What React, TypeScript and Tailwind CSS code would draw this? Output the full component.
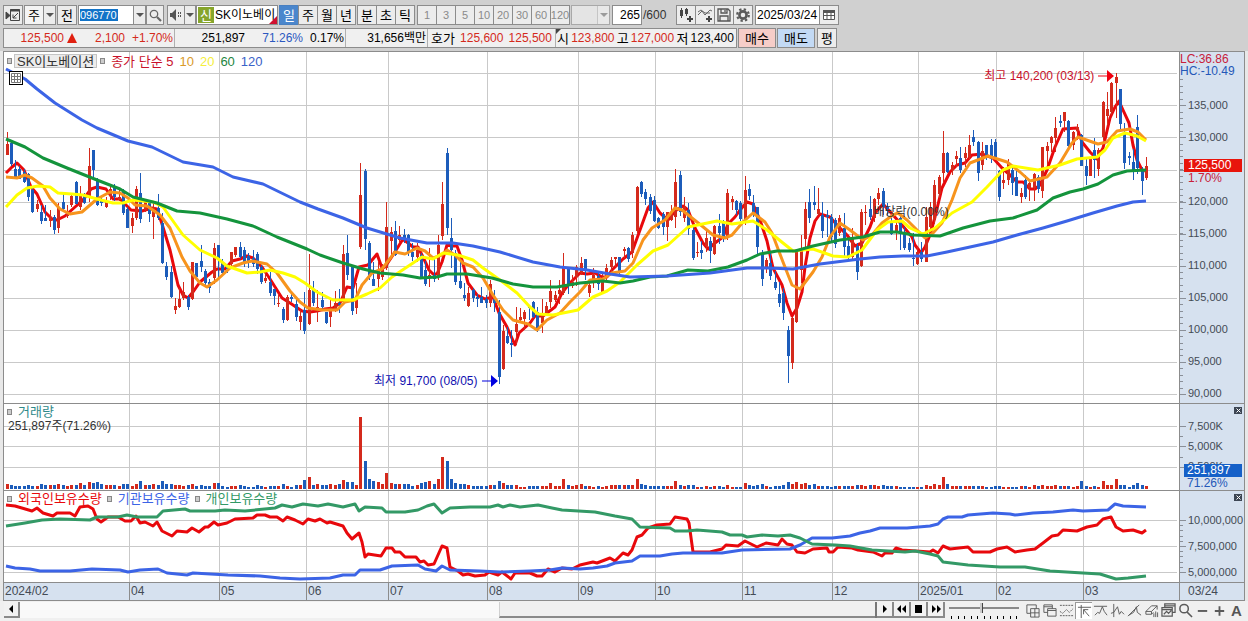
import type { ReactNode } from 'react';

// color, high, body top, body bottom, low (panel units, one entry per session)
const CANDLES = `
r132,144,155,155 b142,143,164,166 b160,169,177,178 b166,169,179,179 b169,172,182,183 b173,174,197,201 b187,190,212,213 r200,204,209,212
b205,212,221,224 b205,218,221,221 r210,217,221,227 b215,217,230,234 r203,207,228,233 b194,202,209,212 r205,213,216,218 r194,196,205,207
b181,182,204,204 r186,196,207,210 b193,196,203,204 r148,166,196,202 b150,150,170,177 b178,180,205,206 b197,200,203,206 r197,202,207,208
r186,189,196,200 b184,188,197,201 r188,197,200,201 b189,191,213,215 b207,209,228,228 r213,218,226,233 r186,189,218,220 b173,193,219,223
r200,202,210,212 b201,203,214,222 r203,207,217,239 b194,208,218,220 b213,223,263,264 b262,266,277,280 b266,272,297,298 r298,306,310,314
r288,299,307,308 r282,292,298,300 b295,297,307,310 r262,262,299,300 b263,263,277,280 b245,261,267,272 b269,271,283,285 b279,282,288,293
r243,248,278,284 b245,245,260,278 b259,263,273,276 b264,266,269,273 r252,252,264,268 r247,247,255,257 b242,247,257,259 b247,250,262,267
b253,256,262,268 b250,258,264,267 b252,254,269,274 b265,267,282,284 r270,278,281,283 b272,282,293,296 b289,289,296,305 r295,303,304,307
b307,309,320,323 r295,297,320,321 b292,297,299,302 b300,304,317,321 r310,316,322,330 b292,310,331,334 r254,290,324,325 b281,290,303,306
r290,307,310,322 b292,300,307,310 b312,312,323,324 r299,308,317,327 r291,303,310,312 b289,303,305,313 r245,254,302,303 b235,253,275,280
b265,267,311,315 r283,298,308,314 r163,195,247,249 b169,171,239,250 b241,243,277,280 b262,279,286,286 r261,270,279,291 r264,266,277,280
r202,227,268,270 r227,232,241,255 b221,231,255,256 r226,235,240,243 b229,235,240,243 b234,235,252,256 b243,252,257,261 r243,250,257,262
b253,255,277,278 b261,270,284,286 r248,275,278,287 b256,275,279,282 r235,245,277,280 r182,204,236,240 b148,153,228,235 b218,238,250,268
b250,253,282,285 b260,281,288,289 b283,295,298,301 r287,293,306,307 b288,290,298,302 b294,297,299,307 b287,297,303,303 b295,299,303,308
r280,284,303,307 b290,299,303,312 b300,312,377,384 r325,331,369,370 b327,336,343,344 b330,343,345,357 r307,324,332,345 r308,317,320,323
r310,312,319,330 b305,307,308,320 b301,302,317,318 b307,312,330,332 r299,314,323,333 r302,306,313,316 r280,291,302,308 r291,295,300,302
r280,290,294,304 r253,267,293,295 b267,269,286,294 r275,282,286,288 r265,267,277,286 r257,263,273,275 b259,259,271,280 r280,285,293,297
r268,275,282,288 b273,276,284,290 r272,278,292,293 r264,268,277,282 r257,260,267,272 r257,257,259,267 b257,257,272,275 r247,249,251,258
b247,248,259,262 r232,235,253,258 r186,187,231,233 b181,182,194,197 b189,192,199,205 b194,197,211,214 b196,200,221,222 b217,218,228,229
b212,214,227,235 r212,212,227,241 r205,212,220,221 r169,182,217,228 b171,175,212,216 r197,207,218,222 b203,210,229,235 b227,230,258,260
r242,252,253,257 b241,250,253,259 r230,238,246,252 b237,241,251,263 r225,226,254,255 b214,226,233,244 b220,221,239,242 r189,193,237,240
r196,199,202,210 b200,201,210,215 b201,203,219,221 r176,190,219,225 b184,189,196,200 b195,203,213,217 b207,207,247,256 b250,253,279,286
r258,260,268,273 b253,263,276,280 b271,282,288,290 b282,294,303,307 b288,293,313,320 b326,330,356,383 r317,318,363,369 r249,251,322,323
r235,249,270,283 r202,209,239,247 b189,202,218,223 b186,202,205,210 r188,209,214,215 b202,215,231,238 b210,215,217,237 b214,217,237,242
b218,220,244,248 r215,218,233,236 b213,228,247,256 b240,246,257,259 r228,238,257,260 b243,246,272,280 r209,212,266,267 r205,212,213,225
b196,209,217,220 r198,199,218,222 r188,193,199,205 b188,191,207,215 b203,207,209,215 b218,222,234,235 r220,225,233,240 b215,218,233,250
b227,232,248,250 b238,243,250,252 b233,258,259,266 r247,252,264,265 b242,252,259,262 r207,217,262,262 r202,207,227,230 r180,185,220,224
r175,177,194,198 r131,153,173,182 b152,153,172,173 r162,165,170,175 r151,156,159,167 b147,158,170,173 r147,153,158,167 r135,145,157,160
b130,137,142,146 b141,142,173,181 r142,151,165,170 b145,145,155,160 b139,145,157,163 b139,142,157,160 b170,171,197,201 r167,180,183,189
r159,163,180,185 b167,170,183,195 b167,177,196,196 r188,193,197,203 b175,180,197,199 r181,183,188,201 r173,174,188,201 b175,177,189,193
r147,147,191,198 r142,146,151,165 r136,137,143,152 r117,128,138,152 b115,121,123,127 r112,112,121,132 b120,121,146,150 r131,132,145,150
r124,127,131,140 b134,135,166,166 b158,166,176,185 r157,159,176,176 b138,150,160,178 r148,150,169,176 r101,102,137,140 r92,109,116,125
r82,83,112,115 r73,77,83,118 b89,89,124,130 b123,133,163,169 b152,156,158,165 b149,162,171,180 b115,127,168,174 b167,170,181,195
r157,166,178,180`
  .trim()
  .split(/\s+/)
  .map((entry, i) => {
    const [high, top, bottom, low] = entry.slice(1).split(',').map(Number);
    return { x: Math.round(6.5 + i * 4.316), up: entry[0] === 'r', high, top, bottom, low };
  });

const VOLUMES = [
  5, 4, 3, 3, 3, 4, 3, 3, 5, 4, 4, 4, 5, 4, 3, 4, 4, 6, 4, 7,
  6, 7, 5, 4, 4, 4, 3, 5, 5, 3, 5, 8, 4, 4, 5, 4, 8, 5, 5, 4,
  4, 3, 4, 5, 3, 4, 3, 3, 6, 6, 3, 2, 3, 3, 4, 3, 2, 2, 4, 3,
  2, 3, 3, 3, 5, 3, 2, 4, 4, 9, 12, 4, 5, 4, 4, 5, 4, 5, 9, 7,
  7, 4, 72, 28, 10, 8, 7, 5, 16, 6, 5, 5, 5, 5, 3, 4, 6, 7, 8, 5,
  10, 32, 28, 10, 6, 5, 5, 4, 3, 3, 3, 3, 4, 4, 8, 6, 4, 4, 4, 2,
  2, 3, 3, 3, 3, 3, 6, 3, 3, 10, 4, 3, 4, 5, 3, 3, 2, 3, 2, 3,
  4, 4, 4, 4, 4, 4, 10, 5, 4, 3, 3, 3, 3, 3, 3, 8, 4, 3, 4, 4,
  2, 2, 3, 2, 3, 3, 2, 4, 2, 2, 2, 6, 4, 3, 4, 5, 3, 2, 3, 3,
  4, 7, 5, 7, 5, 6, 4, 5, 3, 3, 3, 2, 3, 3, 3, 3, 3, 4, 4, 3,
  4, 4, 3, 4, 3, 3, 3, 2, 2, 2, 2, 2, 2, 4, 3, 5, 4, 12, 5, 3,
  3, 3, 3, 3, 3, 3, 3, 2, 2, 3, 3, 2, 2, 2, 2, 3, 3, 2, 4, 3,
  4, 3, 3, 4, 3, 3, 3, 2, 3, 8, 3, 2, 3, 2, 8, 4, 4, 10, 4, 4,
  2, 4, 6, 4, 3,
];

const FAST_AVERAGE = {
  color: '#e8080c',
  points:
    '6,173 12,167 17,163 24,170 31,187 37,194 45,212 52,219 57,220 65,216 75,207 83,200 91,189 97,187 106,189 113,199 120,199 131,210 142,211 152,208 157,209 162,224 170,250 178,285 183,295 188,298 193,292 200,282 212,272 217,269 225,269 232,261 240,259 247,256 253,258 262,267 270,279 282,298 290,303 302,311 310,312 317,311 325,309 333,308 340,303 347,287 353,288 359,267 368,265 377,254 382,268 385,267 393,255 403,239 408,243 413,247 418,247 423,257 429,270 433,274 437,274 442,262 447,245 452,246 457,246 462,260 468,283 477,295 485,299 493,297 499,313 507,327 515,345 519,333 530,323 535,316 543,316 555,307 562,293 568,285 580,273 587,274 595,273 602,277 607,277 612,270 623,259 632,252 640,230 648,208 653,202 660,213 668,220 675,211 683,206 688,210 695,228 703,243 708,249 715,243 723,237 728,224 735,217 740,210 747,202 753,204 760,220 767,241 773,268 782,285 787,303 792,316 797,308 802,292 805,267 810,238 815,221 820,214 830,217 838,226 847,235 855,246 862,243 870,227 875,213 883,204 893,215 902,225 912,237 915,245 921,253 925,247 930,235 935,217 942,188 950,172 957,165 965,163 972,155 982,154 993,158 1002,168 1010,175 1017,182 1023,182 1030,189 1035,189 1040,185 1047,170 1055,147 1063,129 1077,128 1082,142 1090,152 1097,159 1103,148 1110,118 1115,107 1119,101 1123,110 1129,123 1133,145 1137,160 1142,170 1145,171',
};

const SLOW_AVERAGES = [
  {
    color: '#f7941d',
    points:
      '6,177 17,178 25,175 32,178 43,186 50,198 60,209 70,214 82,212 97,199 110,192 120,193 128,198 135,205 147,206 160,215 170,228 182,257 190,271 200,283 207,287 217,280 230,268 243,263 252,261 267,264 277,273 290,291 300,302 308,308 323,310 337,310 345,302 355,300 362,285 372,273 382,269 395,252 405,254 417,248 425,251 433,258 442,255 447,250 455,255 463,263 473,267 483,278 493,295 503,310 513,320 528,324 537,330 547,320 560,313 570,302 580,292 590,280 603,279 612,273 625,271 633,263 643,240 652,228 665,220 675,208 682,210 692,218 702,226 713,235 725,238 732,235 743,222 753,213 765,222 772,233 783,262 792,285 800,289 813,272 822,257 830,237 840,223 850,230 863,240 872,235 882,223 893,215 898,213 907,220 917,230 925,238 933,233 942,223 952,200 960,178 970,163 988,156 1007,162 1020,172 1030,181 1047,177 1060,163 1072,143 1078,137 1098,144 1107,142 1117,131 1130,129 1138,132 1146,140',
  },
  {
    color: '#ffff00',
    points:
      '6,207 17,195 27,188 38,186 50,187 58,193 72,194 83,195 97,199 113,203 123,203 133,200 153,202 163,207 183,235 200,250 217,258 227,266 247,273 260,272 270,270 283,273 295,277 305,283 317,292 333,300 353,300 367,294 380,288 392,277 410,265 422,257 433,259 443,253 458,255 473,260 483,268 500,280 517,293 530,307 538,314 553,315 578,310 593,297 607,291 620,282 637,265 653,251 668,245 688,227 717,221 732,224 753,221 767,230 783,243 793,251 813,249 833,256 848,257 862,250 877,230 888,222 902,221 910,228 923,234 935,228 952,213 972,202 987,187 1003,170 1013,166 1038,170 1060,165 1077,159 1097,157 1105,150 1113,138 1125,133 1137,136 1146,141',
  },
  {
    color: '#14943c',
    points:
      '6,139 25,147 43,158 67,168 97,180 120,189 133,197 157,203 177,211 200,213 227,219 253,226 277,237 307,249 320,255 343,263 363,269 380,273 403,275 420,278 437,277 447,274 467,274 492,278 513,284 533,287 557,287 580,283 603,281 620,283 633,281 650,277 667,276 688,270 708,271 728,267 747,260 760,254 777,251 795,251 813,246 840,240 863,237 880,232 897,232 913,235 940,236 963,228 990,221 1013,218 1037,210 1053,198 1070,192 1083,189 1098,184 1113,175 1127,171 1146,170',
  },
  {
    color: '#3c64e6',
    points:
      '6,69 25,79 37,89 55,103 82,120 97,128 128,141 152,147 183,162 213,167 233,177 263,184 300,202 318,209 343,218 367,228 400,238 427,243 453,243 473,246 500,252 533,262 560,267 587,270 610,274 630,277 667,276 710,273 747,268 767,268 793,269 820,264 860,259 880,257 903,256 927,256 947,252 970,247 993,242 1017,235 1043,228 1067,221 1093,213 1117,206 1133,202 1146,201',
  },
];

const HOLDINGS = [
  {
    name: '외국인보유수량',
    color: '#e8080c',
    points:
      '6,505 15,506 32,511 37,508 43,513 53,516 57,513 70,513 75,516 80,507 88,506 93,509 97,519 101,522 108,517 118,517 125,521 131,521 136,516 140,523 145,522 153,526 157,522 162,531 172,536 177,531 187,532 192,528 199,532 205,527 208,527 214,522 218,525 227,523 235,519 253,518 257,515 265,515 270,517 277,517 283,521 287,517 295,520 303,524 308,519 315,521 320,519 327,523 330,522 343,526 347,533 352,539 359,533 362,542 365,557 368,554 381,556 386,548 392,548 395,552 400,552 405,557 416,557 420,562 424,561 428,565 434,564 438,555 442,546 447,548 450,567 458,571 463,575 468,574 475,576 485,575 489,572 498,575 502,572 511,579 515,573 530,573 537,576 542,576 548,569 555,572 562,568 572,569 580,565 593,562 597,563 610,558 615,561 623,553 628,555 632,550 637,537 642,535 648,528 657,525 670,524 675,517 687,519 689,523 693,552 710,552 722,549 726,545 738,546 745,541 757,547 766,543 778,545 782,539 787,544 792,545 797,552 805,553 813,549 827,548 829,552 833,552 838,547 852,548 858,550 873,552 882,556 885,553 892,553 896,548 902,550 930,552 933,550 938,553 943,546 950,549 968,547 973,552 990,552 997,549 1007,547 1015,552 1027,550 1035,549 1043,543 1052,536 1058,535 1063,530 1077,531 1087,527 1097,525 1103,519 1111,517 1116,527 1123,531 1133,530 1142,533 1146,530',
  },
  {
    name: '기관보유수량',
    color: '#3c64e6',
    points:
      '6,566 15,568 30,569 40,571 70,571 92,569 120,570 128,572 140,570 158,569 167,573 187,575 193,573 228,575 260,576 280,578 300,579 330,578 343,575 355,575 360,570 380,570 392,566 418,565 425,569 436,571 442,566 450,570 480,571 500,572 530,571 550,570 562,568 580,569 593,568 607,566 615,563 632,561 640,556 660,556 672,554 683,553 722,553 742,550 790,549 800,545 812,538 832,538 850,536 860,533 870,531 880,528 907,528 930,526 938,524 943,519 948,517 962,517 968,515 993,513 1010,514 1015,515 1033,513 1053,512 1073,510 1083,511 1108,510 1115,504 1123,506 1146,507',
  },
  {
    name: '개인보유수량',
    color: '#339966',
    points:
      '6,526 25,523 42,520 60,519 90,520 97,517 118,517 127,515 137,517 157,517 163,511 185,509 190,511 215,511 225,510 245,511 275,508 282,505 292,507 303,504 318,506 328,504 343,507 355,504 359,511 365,507 382,508 386,512 405,512 418,510 427,506 434,504 442,513 450,508 470,507 490,507 498,505 503,507 510,505 520,507 538,505 552,508 562,510 595,512 615,516 632,519 640,527 670,528 675,531 687,531 697,530 722,532 730,535 742,535 747,537 762,535 778,536 790,535 800,538 812,544 835,545 850,546 872,550 905,552 915,551 930,554 938,556 943,562 968,565 1000,567 1025,567 1050,571 1083,573 1100,574 1116,579 1128,578 1146,576',
  },
];

const MONTH_LINES = [129, 219, 306, 388, 487, 578, 655, 742, 832, 918, 996, 1083];
const MONTHS = ['2024/02', '04', '05', '06', '07', '08', '09', '10', '11', '12', '2025/01', '02', '03'];
const UP = '#d42a1c';
const DOWN = '#1c5cba';

const frame = 'border border-[#8c8c8c] bg-[#ececec]';
const iconButton = `${frame} flex h-5 items-center justify-center shrink-0`;

function Plot({ top, height, grid, label, children }: { top: number; height: number; grid: number[]; label: string; children: ReactNode }) {
  return (
    <svg className="block h-full w-full" viewBox={`4 ${top} 1175 ${height}`} preserveAspectRatio="none" role="img" aria-label={label}>
      <g stroke="#c9c9c9" strokeWidth="1" shapeRendering="crispEdges">
        {grid.map((y) => (
          <line key={y} x1="4" x2="1177" y1={y + 0.5} y2={y + 0.5} />
        ))}
        {MONTH_LINES.map((x) => (
          <line key={x} x1={x + 0.5} x2={x + 0.5} y1={top} y2={top + height} />
        ))}
      </g>
      {children}
    </svg>
  );
}

function Ticks({ top, height, major, step }: { top: number; height: number; major: number[]; step: number }) {
  const minor: number[] = [];
  for (let y = major[major.length - 1]; y > top + 25; y -= step) minor.push(Math.round(y));
  return (
    <svg className="h-full w-2 shrink-0" viewBox={`0 ${top} 8 ${height}`} preserveAspectRatio="none" stroke="#8a8f98" shapeRendering="crispEdges" aria-hidden="true">
      {minor.map((y) => (
        <line key={y} x1="0" x2="3" y1={y + 0.5} y2={y + 0.5} />
      ))}
      {major.map((y) => (
        <line key={`m${y}`} x1="0" x2="6" y1={y + 0.5} y2={y + 0.5} />
      ))}
    </svg>
  );
}

function Marker() {
  return <span className="h-[6px] w-[5px] shrink-0 border border-[#888] bg-[#ccc]" />;
}

function Caret() {
  return (
    <svg className="pointer-events-none h-1 w-2" viewBox="0 0 8 4" aria-hidden="true">
      <path d="M0 0h8L4 4z" fill="#555" />
    </svg>
  );
}

function CloseButton() {
  return (
    <button aria-label="닫기" className="absolute right-[2px] top-[3px] flex h-[7px] w-2 items-center justify-center bg-[#3d4654]">
      <svg className="h-[5px] w-[5px]" viewBox="0 0 5 5" stroke="#fff" strokeWidth="1">
        <path d="M.5.5l4 4M4.5.5l-4 4" />
      </svg>
    </button>
  );
}

function TopBar() {
  return (
    <div className="flex items-center pl-[3px] pt-[5px] leading-none">
      <button aria-label="패널 접기" className={`${iconButton} w-5`}>
        <svg className="h-4 w-4" viewBox="0 0 16 16" fill="none" stroke="#444">
          <path d="M5.5 2.5h9v11h-9z" />
          <path d="M5 3.5h10" strokeWidth="2" />
          <path d="M1 5v7l4-3.5z" fill="#444" />
          <path d="M13 6L8 11M8 7.500V11h3.500" />
        </svg>
      </button>
      <div className="relative ml-px">
        <select aria-label="종목 구분" className="h-5 w-8 appearance-none border border-[#8c8c8c] bg-[#f4f4f4] pl-[3px] text-[13px] leading-none">
          <option>주</option>
        </select>
        <span className="pointer-events-none absolute inset-y-px right-px flex w-3 items-center justify-center border-l border-[#8c8c8c] bg-[#ececec]">
          <Caret />
        </span>
      </div>
      <button className={`${iconButton} ml-px w-5 text-[13px]`}>전</button>
      <div className={`${frame} ml-px flex h-5 w-[68px]`}>
        <label className="flex min-w-0 flex-1 items-center bg-white pl-px">
          <span className="sr-only">종목코드</span>
          <input defaultValue="096770" className="h-3 w-[38px] bg-[#1173c8] text-[11px] text-white outline-none" />
        </label>
        <button aria-label="종목 목록" className="flex w-3 items-center justify-center border-l border-[#8c8c8c]">
          <Caret />
        </button>
      </div>
      <button aria-label="검색" className={`${iconButton} w-[18px]`}>
        <svg className="h-[13px] w-[13px]" viewBox="0 0 13 13" fill="none" stroke="#666">
          <circle cx="5" cy="5" r="3.7" strokeWidth="1.3" />
          <path d="M8 8l4 4" strokeWidth="2.2" />
        </svg>
      </button>
      <button aria-label="음성" className={`${iconButton} ml-[3px] w-[18px]`}>
        <svg className="h-3 w-3" viewBox="0 0 12 12" fill="#555">
          <path d="M0 4h2l4-4v12L2 8H0zM8 3h1v2H8zM8 6h1v2H8zM10 3h1v2h-1zM10 6h1v2h-1z" />
        </svg>
      </button>
      <button aria-label="음성 옵션" className={`${iconButton} -ml-px w-3`}>
        <Caret />
      </button>
      <div className="relative flex h-5 w-[82px] shrink-0 border border-[#8c8c8c] bg-white">
        <span className="m-px flex w-4 shrink-0 items-center justify-center bg-[#86a52c] text-[13px] text-white">신</span>
        <span className="flex flex-1 items-center whitespace-nowrap">SK이노베이</span>
        <svg className="absolute bottom-0 right-0 h-2 w-2" viewBox="0 0 8 8" aria-hidden="true">
          <path d="M8 0v8H0z" fill="#d01030" />
        </svg>
      </div>
      <div className="ml-px flex text-[13px]">
        <button className="h-5 w-5 border border-[#4a80c0] bg-[#4a86cc] text-white">일</button>
        {['주', '월', '년'].map((unit) => (
          <button key={unit} className={`${iconButton} -ml-px w-5`}>
            {unit}
          </button>
        ))}
      </div>
      <div className="ml-px flex text-[13px]">
        {['분', '초', '틱'].map((unit) => (
          <button key={unit} className={`${iconButton} -mr-px w-5`}>
            {unit}
          </button>
        ))}
      </div>
      <div className="ml-[3px] flex text-[11px] text-[#8a8a8a]">
        {['1', '3', '5', '10', '20', '30', '60', '120'].map((n) => (
          <button key={n} className={`${iconButton} -mr-px w-5`}>
            {n}
          </button>
        ))}
      </div>
      <div className="relative ml-[2px]">
        <select aria-label="주기" disabled className="h-5 w-[39px] appearance-none border border-[#a8a8a8] bg-[#e4e4e4]" />
        <span className="pointer-events-none absolute inset-y-px right-px flex w-3 items-center justify-center border-l border-[#a8a8a8] bg-[#ececec] opacity-50">
          <Caret />
        </span>
      </div>
      <label className="ml-[2px] flex items-center">
        <input aria-label="조회 개수" defaultValue="265" className="h-5 w-[30px] border border-[#8c8c8c] bg-white pr-px text-right outline-none" />
        <span className="w-[34px] pl-px text-[#333]">/600</span>
      </label>
      <div className="flex">
        <button aria-label="차트 추가" className={`${iconButton} -mr-px w-5`}>
          <svg className="h-4 w-4" viewBox="0 0 16 16" fill="#444">
            <path d="M3 1h1v2h1v6H4v2H3V9H2V3h1zM8 1h1v1h1v5H9v2H8V7H7V2h1zM11 9h2v2h2v2h-2v2h-2v-2H9v-2h2z" />
          </svg>
        </button>
        <button aria-label="지표 추가" className={`${iconButton} -mr-px w-5`}>
          <svg className="h-4 w-4" viewBox="0 0 16 16" fill="none" stroke="#666">
            <path d="M1 8l4-4 3 4 5-5 2 1M1 5l3-2 4 3 5 0" />
            <path d="M11 9h2v2h2v2h-2v2h-2v-2H9v-2h2z" fill="#444" stroke="none" />
          </svg>
        </button>
        <button aria-label="저장" className={`${iconButton} -mr-px w-5`}>
          <svg className="h-4 w-4" viewBox="0 0 16 16" fill="none" stroke="#555" strokeWidth="1.3">
            <path d="M2 2h10l2 2v10H2zM5 2v4h6V2M4 14V9h8v5M9 3v2" />
          </svg>
        </button>
        <button aria-label="설정" className={`${iconButton} w-5`}>
          <svg className="h-[14px] w-[14px]" viewBox="0 0 14 14" fill="none" stroke="#5a5a5a">
            <circle cx="7" cy="7" r="3.6" strokeWidth="2.6" />
            <circle cx="7" cy="7" r="5.8" strokeWidth="2.2" strokeDasharray="2.3 2.255" />
          </svg>
        </button>
      </div>
      <label className="ml-[2px] flex">
        <input aria-label="조회 일자" defaultValue="2025/03/24" className="h-5 w-[65px] border border-[#8c8c8c] bg-white pl-px outline-none" />
      </label>
      <button aria-label="달력" className={`${iconButton} -ml-px w-5`}>
        <svg className="h-[10px] w-3" viewBox="0 0 12 10" fill="none" stroke="#555">
          <path d="M.5.5h11v9H.5zM.5 5.5h11M4 2v8M8 2v8" fill="#fff" />
          <path d="M0 1.5h12" strokeWidth="3" />
        </svg>
      </button>
    </div>
  );
}

function QuoteBar() {
  return (
    <div className="flex pb-[3px] pl-[3px] pt-[3px]">
      <div className="flex h-5 items-center whitespace-nowrap border border-[#8c8c8c] bg-[#f0f0f0] leading-none">
        <div className="flex h-full w-[171px] items-center border-r border-[#b0b0b0] pr-px text-right text-[#d42a1c]">
          <span className="w-[60px]">125,500</span>
          <svg className="ml-[3px] h-[10px] w-[10px]" viewBox="0 0 10 10" aria-hidden="true">
            <path d="M5 0l5 10H0z" fill="#e02010" />
          </svg>
          <span className="flex-1">2,100</span>
          <span className="w-12">+1.70%</span>
        </div>
        <div className="flex h-full w-[171px] items-center border-r border-[#b0b0b0] pr-px text-right">
          <span className="w-[70px]">251,897</span>
          <span className="w-[58px] text-[#2c58c0]">71.26%</span>
          <span className="flex-1">0.17%</span>
        </div>
        <div className="flex h-full w-[82px] items-center justify-end border-r border-[#b0b0b0] pr-px">31,656백만</div>
        <div className="flex h-full w-32 items-center justify-between border-r border-[#b0b0b0] pl-[3px] pr-[3px]">
          <span className="text-[13px]">호가</span>
          <span className="text-[#d42a1c]">125,600</span>
          <span className="text-[#d42a1c]">125,500</span>
        </div>
        <div className="relative flex h-full w-[180px] items-center justify-between pl-px pr-[2px]">
          <svg className="absolute left-0 top-0 h-[5px] w-[5px]" viewBox="0 0 5 5" aria-hidden="true">
            <path d="M0 0h5L0 5z" fill="#444" />
          </svg>
          <span className="text-[13px]">시</span>
          <span className="text-[#d42a1c]">123,800</span>
          <span className="text-[13px]">고</span>
          <span className="text-[#d42a1c]">127,000</span>
          <span className="text-[13px]">저</span>
          <span>123,400</span>
        </div>
      </div>
      <button className="ml-px h-5 w-[38px] border border-[#8c8c8c] bg-[#f6cdc8] text-[13px] leading-none">매수</button>
      <button className="ml-px h-5 w-[38px] border border-[#8c8c8c] bg-[#c3daf5] text-[13px] leading-none">매도</button>
      <button className="ml-[2px] h-5 w-5 border border-[#8c8c8c] bg-[#ececec] text-[13px] leading-none">평</button>
    </div>
  );
}

function PricePanel() {
  return (
    <section className="flex h-[351px]">
      <div className="relative min-w-0 flex-1">
        <Plot top={52} height={351} grid={[73, 105, 137, 170, 202, 234, 266, 298, 330, 362, 394]} label="주가 차트">
          <polyline points={FAST_AVERAGE.points} stroke={FAST_AVERAGE.color} fill="none" strokeWidth="3" strokeLinejoin="round" />
          <g shapeRendering="crispEdges">
            {CANDLES.map((c) => (
              <g key={c.x} fill={c.up ? UP : DOWN}>
                <rect x={c.x} y={c.high} width="1" height={Math.max(1, c.low - c.high)} />
                <rect x={c.x - 1} y={c.top} width="3" height={Math.max(1, c.bottom - c.top)} />
              </g>
            ))}
          </g>
          <g fill="none" strokeWidth="3" strokeLinejoin="round">
            {SLOW_AVERAGES.map((ma) => (
              <polyline key={ma.color} points={ma.points} stroke={ma.color} />
            ))}
          </g>
        </Plot>
        <div className="absolute left-[3px] top-px flex h-4 items-center whitespace-nowrap text-[13px] leading-none">
          <Marker />
          <span className="ml-[2px] flex h-[14px] items-center border border-[#c4c4c4] bg-[#ececec] px-[2px] text-[#333]">SK이노베이션</span>
          <span className="w-[3px]" />
          <Marker />
          <span className="ml-[6px] text-[#c8102a]">종가 단순 5</span>
          <span className="ml-[6px] text-[#d99a2a]">10</span>
          <span className="ml-[6px] text-[#f4ee3c]">20</span>
          <span className="ml-[6px] text-[#23863f]">60</span>
          <span className="ml-[6px] text-[#3a62c8]">120</span>
        </div>
        <button aria-label="표 보기" className="absolute left-[5px] top-[19px] flex h-[14px] w-[14px] items-center justify-center border border-black bg-white">
          <svg className="h-[10px] w-[10px]" viewBox="0 0 10 10" fill="none" stroke="#777">
            <path d="M.5.5h9v9h-9zM.5 3.5h9M.5 6.5h9M3.5.5v9M6.500.5v9" />
          </svg>
        </button>
        <p className="absolute right-[5.5%] top-4 flex items-center gap-1 whitespace-nowrap leading-4 text-[#c8102a]">
          최고 140,200 (03/13)
          <svg className="h-3 w-4" viewBox="0 0 16 12" aria-hidden="true">
            <path d="M0 5.5h9V0l7 6-7 6V6.500H0z" fill="#f00010" />
          </svg>
        </p>
        <p className="absolute right-[58%] top-[321px] flex items-center gap-1 whitespace-nowrap leading-4 text-[#1010b0]">
          최저 91,700 (08/05)
          <svg className="h-3 w-4" viewBox="0 0 16 12" aria-hidden="true">
            <path d="M0 5.5h9V0l7 6-7 6V6.500H0z" fill="#0000e0" />
          </svg>
        </p>
        <p className="absolute left-[74%] top-[152px] whitespace-nowrap leading-4 text-[#333]">배당락(0.00%)</p>
      </div>
      <div className="relative flex w-[65px] shrink-0 border-l border-[#8c8c8c] bg-[#d6e1ef]">
        <Ticks top={52} height={351} major={[105, 137, 170, 202, 234, 266, 298, 330, 362, 394]} step={6.42} />
        <div className="pt-[37px] text-[11px] leading-8 text-[#444b55]">
          {['135,000', '130,000', '', '120,000', '115,000', '110,000', '105,000', '100,000', '95,000', '90,000'].map((price, i) => (
            <p key={i} className="h-8">
              {price}
            </p>
          ))}
        </div>
        <div className="absolute left-0 top-px leading-3">
          <p className="text-[#c8203a]">LC:36.86</p>
          <p className="text-[#2458b8]">HC:-10.49</p>
        </div>
        <div className="absolute left-1 right-[2px] top-[107px] leading-[13px]">
          <p className="bg-[#e8150c] pl-1 text-white">125,500</p>
          <p className="pl-1 text-[#c8203a]">1.70%</p>
        </div>
      </div>
    </section>
  );
}

function VolumePanel() {
  return (
    <section className="flex h-[87px] border-t border-[#8c8c8c]">
      <div className="relative min-w-0 flex-1">
        <Plot top={404} height={86} grid={[426, 446, 467]} label="거래량 차트">
          <g shapeRendering="crispEdges">
            {CANDLES.map((c, i) => (
              <rect key={c.x} x={c.x - 1} y={489 - VOLUMES[i]} width="3" height={VOLUMES[i]} fill={c.up ? UP : DOWN} />
            ))}
          </g>
        </Plot>
        <div className="absolute left-[3px] top-px leading-[14px]">
          <p className="flex items-center gap-[6px] text-[13px] text-[#2f8a8a]">
            <Marker />
            거래량
          </p>
          <p className="pl-px text-[#333]">251,897주(71.26%)</p>
        </div>
      </div>
      <div className="relative flex w-[65px] shrink-0 border-l border-[#8c8c8c] bg-[#d6e1ef]">
        <Ticks top={404} height={86} major={[426, 446, 467]} step={10.3} />
        <div className="pt-3 text-[11px] leading-5 text-[#444b55]">
          <p>7,500K</p>
          <p>5,000K</p>
          <p>2,500K</p>
        </div>
        <div className="absolute left-1 right-[2px] top-[60px] leading-[13px]">
          <p className="bg-[#1560c8] pl-[3px] text-white">251,897</p>
          <p className="pl-[3px] text-[#2458b8]">71.26%</p>
        </div>
        <CloseButton />
      </div>
    </section>
  );
}

function HoldingsPanel() {
  return (
    <section className="flex h-[92px] border-t border-[#8c8c8c]">
      <div className="relative min-w-0 flex-1">
        <Plot top={491} height={91} grid={[520, 546, 572]} label="보유수량 차트">
          <g fill="none" strokeWidth="3" strokeLinejoin="round">
            {HOLDINGS.map((h) => (
              <polyline key={h.name} points={h.points} stroke={h.color} />
            ))}
          </g>
        </Plot>
        <div className="absolute left-[3px] top-px flex gap-[5px] whitespace-nowrap text-[13px] leading-[14px]">
          {HOLDINGS.map((h) => (
            <p key={h.name} className="flex items-center gap-[6px]">
              <Marker />
              <span style={{ color: h.color }}>{h.name}</span>
            </p>
          ))}
        </div>
      </div>
      <div className="relative flex w-[65px] shrink-0 border-l border-[#8c8c8c] bg-[#d6e1ef]">
        <Ticks top={491} height={91} major={[520, 546, 572]} step={5.2} />
        <div className="pt-4 text-[11px] leading-[26px] text-[#444b55]">
          <p>10,000,000</p>
          <p>7,500,000</p>
          <p>5,000,000</p>
        </div>
        <CloseButton />
      </div>
    </section>
  );
}

function TimeAxis() {
  return (
    <div className="flex h-[18px] border-t border-[#8c8c8c] bg-[#d6e1ef] text-[#444b55]">
      <div className="grid min-w-0 flex-1 grid-cols-[125fr_90fr_87fr_82fr_99fr_91fr_77fr_87fr_90fr_86fr_78fr_87fr_96fr] leading-[17px]">
        {MONTHS.map((month, i) => (
          <span key={i} className={i ? 'min-w-0 border-l border-[#8c8c8c] pl-px' : 'min-w-0 pl-px'}>
            {month}
          </span>
        ))}
      </div>
      <span className="w-[65px] shrink-0 border-l border-[#8c8c8c] pl-2 leading-[17px]">03/24</span>
    </div>
  );
}

const TOOLS: { name: string; art: ReactNode }[] = [
  { name: '창 추가', art: <path d="M12 6V2H2v9h4M6 6h9v9H6zM10.5 6v9M6 10.5h9" /> },
  { name: '창 복사', art: <path d="M11 6V2H2v8h4M6 6h9v8H6zM2 4h9M6 8h9" /> },
  { name: '추세 영역', art: <path d="M1 2.5h14M1 13.5h14M1 9l3 2 4-4 3 3 4-4" strokeDasharray="2 1" /> },
  { name: '십자선', art: <path d="M1 3.5h14M4.5 1v14M7 6l6 7M7 6h5M7 6v5" /> },
  { name: '고가선', art: <path d="M1 3.5h14M2 13l3-3 2 1 3-7 2 5 3 4" /> },
  { name: '수직선', art: <path d="M4 1v14M1 11l3-1 4-6 2 8 2-3 3 3" /> },
  { name: '추세선', art: <path d="M1 14L13 2M2 13l5-3 3-6 1 6 4 3" /> },
  { name: '지우개', art: <path d="M2 9l6-6h6l-6 6zM2 9v3h6V9M8 12l2-2M14 3v4M10.500 11v4M12.500 9v6M14.500 10v5" /> },
  { name: '차트 묶음', art: <path d="M4 5V1h11v9h-3M4 3h11M1 5h11v9H1zM1 7h11M3 12l3-3 2 2 3-3" strokeWidth="1.3" /> },
  { name: '확대경', art: <path d="M10 10l5 5M11 6A4.500 4.500 0 1 1 2 6a4.500 4.500 0 0 1 9 0z" strokeWidth="1.6" /> },
  { name: '축소', art: <path d="M3 8.500h10" strokeWidth="2" /> },
  { name: '확대', art: <path d="M3 8.500h10M8 3.500v10" strokeWidth="2" /> },
];

const PLAYBACK = [
  { name: '재생', d: 'M5 3v8l4-4z' },
  { name: '뒤로', d: 'M6 3v8L2 7zM11 3v8L7 7z' },
  { name: '정지', d: 'M3 3h7v8H3z' },
  { name: '앞으로', d: 'M3 3v8l4-4zM8 3v8l4-4z' },
];

const raised = 'flex h-4 items-center justify-center border-b-2 border-r-2 border-[#8a8a8a] bg-[#f2f2f2]';
const toolButton = 'flex h-[17px] w-[17px] items-center justify-center';

function BottomBar() {
  return (
    <div className="flex h-5 items-start bg-[#f0f0f0] pl-1 pr-[3px] pt-px">
      <button aria-label="왼쪽으로" className={`${raised} w-4 shrink-0`}>
        <svg className="h-2 w-1" viewBox="0 0 4 8">
          <path d="M4 0v8L0 4z" />
        </svg>
      </button>
      <div className="flex h-4 min-w-0 flex-1 bg-[#f9f9f9]">
        <div className="ml-[56%] h-4 flex-1 border-b-2 border-l border-[#8a8a8a] border-l-[#d0d0d0] bg-[#f0f0f0]" />
      </div>
      <div className="flex border-l-2 border-[#777]">
        {PLAYBACK.map((p) => (
          <button key={p.name} aria-label={p.name} className={`${raised} w-[17px]`}>
            <svg className="h-[14px] w-[14px]" viewBox="0 0 14 14">
              <path d={p.d} />
            </svg>
          </button>
        ))}
      </div>
      <div className="ml-1 w-[70px]">
        <input
          type="range"
          aria-label="배율"
          defaultValue="47"
          className="block h-[11px] w-full appearance-none bg-transparent [&::-webkit-slider-runnable-track]:h-[2px] [&::-webkit-slider-runnable-track]:bg-[#8a8a8a] [&::-webkit-slider-thumb]:-mt-1 [&::-webkit-slider-thumb]:h-[10px] [&::-webkit-slider-thumb]:w-[3px] [&::-webkit-slider-thumb]:appearance-none [&::-webkit-slider-thumb]:border-r [&::-webkit-slider-thumb]:border-[#444] [&::-webkit-slider-thumb]:bg-[#ccc]"
        />
        <div className="mx-[2px] mt-[3px] flex justify-between">
          {Array.from({ length: 11 }, (_, i) => (
            <span key={i} className="h-[3px] w-px bg-black" />
          ))}
        </div>
      </div>
      <div className="ml-[5px] flex">
        {TOOLS.map((tool, i) => (
          <button key={tool.name} aria-label={tool.name} className={i === 3 ? `${toolButton} border-l border-t border-[#999] bg-white` : toolButton}>
            <svg className="h-[15px] w-[15px]" viewBox="0 0 16 16" fill="none" stroke="#5a5a5a">
              {tool.art}
            </svg>
          </button>
        ))}
        <button aria-label="글자 크기" className={`${toolButton} text-[15px] font-bold leading-none text-[#555]`}>
          A
        </button>
      </div>
    </div>
  );
}

export default function App() {
  return (
    <main className="min-h-screen bg-[#d0d0d0] font-['Liberation_Sans','Noto_Sans_CJK_KR',sans-serif] text-[12px] text-black">
      <TopBar />
      <QuoteBar />
      <div className="bg-[#e8e8e8] pl-[3px] pr-[3px]">
        <div className="border border-[#8c8c8c] bg-white">
          <PricePanel />
          <VolumePanel />
          <HoldingsPanel />
          <TimeAxis />
        </div>
      </div>
      <BottomBar />
    </main>
  );
}
